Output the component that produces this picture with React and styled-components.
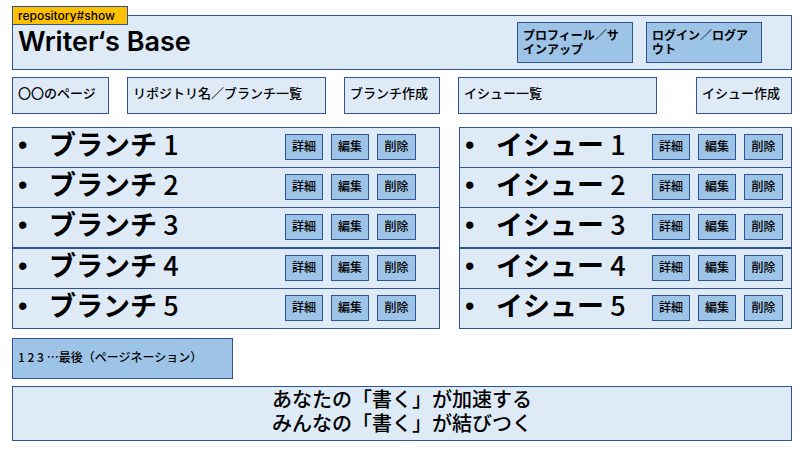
import React from "react";
import styled, { createGlobalStyle } from "styled-components";

const line = "#2f5496";
const pale = "#deeaf6";
const mid = "#9dc3e6";

const GlobalStyle = createGlobalStyle`
  *, *::before, *::after { box-sizing: border-box; }
  body {
    margin: 0;
    background: #fff;
    color: #000;
    font-family: "Noto Sans CJK JP", "Noto Sans", sans-serif;
    font-weight: 500;
  }
  h1, p, ul { margin: 0; padding: 0; }
`;

const Page = styled.div`
  display: flex;
  flex-direction: column;
  padding: 15px 8px 9px 12px;
`;

const Header = styled.header`
  position: relative;
  display: flex;
  justify-content: space-between;
  align-items: flex-start;
  padding: 6px 29px 6px 5px;
  border: 1px solid ${line};
  background: ${pale};
`;

const RouteTag = styled.span`
  position: absolute;
  top: -10px;
  left: -1px;
  width: 116px;
  padding: 0 5px;
  border: 1px solid ${line};
  background: #ffc000;
  font-family: Inter, sans-serif;
  font-size: 12px;
  font-weight: 500;
  line-height: 17px;
`;

const Title = styled.h1`
  padding-top: 4px;
  font-family: Inter, sans-serif;
  font-size: 27px;
  font-weight: 600;
  line-height: 32px;
`;

const Account = styled.div`
  display: flex;
  gap: 13px;
`;

const Button = styled.button`
  margin: 0;
  padding: 0;
  border: 1px solid ${line};
  border-radius: 0;
  background: ${mid};
  color: inherit;
  font: inherit;
  font-size: 12px;
  line-height: 14px;
  cursor: pointer;
`;

const AccountButton = styled(Button)`
  width: 116px;
  padding: 5px 12px 6px 5px;
  font-weight: 700;
  text-align: left;
`;

const Nav = styled.nav`
  display: grid;
  grid-template-columns: 97fr 199fr 96fr 199fr 117fr;
  gap: 18px;
  margin-top: 7px;
`;

const NavLink = styled.a`
  padding: 5px 5px 11px;
  border: 1px solid ${line};
  background: ${pale};
  color: inherit;
  font-size: 13px;
  line-height: 19px;
  text-decoration: none;
  white-space: nowrap;
  &:last-child { margin-left: 21px; }
`;

const Lists = styled.main`
  display: grid;
  grid-template-columns: 428fr 333fr;
  gap: 19px;
  margin-top: 13px;
`;

const List = styled.ul`
  border: 1px solid ${line};
  list-style: none;
`;

const Row = styled.li`
  display: flex;
  align-items: center;
  padding: 0 ${(p) => p.$end}px 0 5px;
  background: ${pale};
  border-bottom: 1px solid ${line};
  font-size: 27px;
  line-height: 39px;
  &:nth-child(3) { border-bottom-width: 2px; }
  &:last-child { border-bottom: 0; }
`;

const Bullet = styled.span`
  width: 31px;
  line-height: 35px;
  padding-bottom: 4px;
  font-family: "Liberation Sans", sans-serif;
`;

const Name = styled.span`
  flex: 1;
  line-height: 31px;
  padding-bottom: 8px;
  font-weight: 700;
  white-space: nowrap;
`;

const Digit = styled.span`
  font-weight: 500;
`;

const Actions = styled.div`
  display: flex;
  gap: 8px;
  padding-bottom: 1px;
`;

const ActionButton = styled(Button)`
  width: 38px;
  height: 26px;
  padding-bottom: 2px;
  &:last-child { width: 39px; }
`;

const Pager = styled.nav`
  align-self: flex-start;
  width: 221px;
  margin-top: 9px;
  padding: 9px 5px 12px;
  border: 1px solid ${line};
  background: ${mid};
  font-size: 12px;
  line-height: 18px;
`;

const PageLink = styled.a`
  color: inherit;
  text-decoration: none;
`;

const Footer = styled.footer`
  margin-top: 7px;
  padding: 0 0 5px;
  border: 1px solid ${line};
  background: ${pale};
  font-size: 20px;
  line-height: 24px;
  text-align: center;
`;

const numbers = [1, 2, 3, 4, 5];

function ItemList({ label, end }) {
  return (
    <List>
      {numbers.map((n) => (
        <Row key={n} $end={end}>
          <Bullet aria-hidden="true">•</Bullet>
          <Name>{label} <Digit>{n}</Digit></Name>
          <Actions>
            <ActionButton>詳細</ActionButton>
            <ActionButton>編集</ActionButton>
            <ActionButton>削除</ActionButton>
          </Actions>
        </Row>
      ))}
    </List>
  );
}

export default function App() {
  return (
    <>
      <GlobalStyle />
      <Page>
        <Header>
          <RouteTag>repository#show</RouteTag>
          <Title>Writer‘s Base</Title>
          <Account>
            <AccountButton>プロフィール／サインアップ</AccountButton>
            <AccountButton>ログイン／ログアウト</AccountButton>
          </Account>
        </Header>
        <Nav>
          <NavLink href="#page">〇〇のページ</NavLink>
          <NavLink href="#branches">リポジトリ名／ブランチ一覧</NavLink>
          <NavLink href="#new-branch">ブランチ作成</NavLink>
          <NavLink href="#issues">イシュー一覧</NavLink>
          <NavLink href="#new-issue">イシュー作成</NavLink>
        </Nav>
        <Lists>
          <ItemList label="ブランチ" end={23} />
          <ItemList label="イシュー" end={8} />
        </Lists>
        <Pager>
          <PageLink href="#1">1</PageLink> <PageLink href="#2">2</PageLink>{" "}
          <PageLink href="#3">3</PageLink> …<PageLink href="#last">最後</PageLink>
          （ページネーション）
        </Pager>
        <Footer>
          <p>
            あなたの「書く」が加速する
            <br />
            みんなの「書く」が結びつく
          </p>
        </Footer>
      </Page>
    </>
  );
}
